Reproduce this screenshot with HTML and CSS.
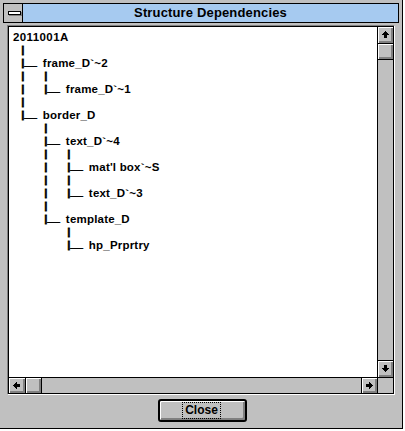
FILE: index.html
```html
<!DOCTYPE html>
<html>
<head>
<meta charset="utf-8">
<title>Structure Dependencies</title>
<link rel="stylesheet" href="styles.css">
</head>
<body>
<div class="window">
  <div class="titlebar">
    <div class="sysmenu"><span class="sysbar"></span></div>
    <div class="title">Structure Dependencies</div>
  </div>
  <div class="client">
    <div class="listwrap">
      <div class="listbox">
        <div class="content">
          <div class="row root">2011001A</div>
          <div class="row"><span class="bar">|</span></div>
          <div class="row"><span class="bar">|</span><span class="us">__</span> frame_D`~2</div>
          <div class="row"><span class="ind"><span class="bar">|</span></span><span class="bar">|</span></div>
          <div class="row"><span class="ind"><span class="bar">|</span></span><span class="bar">|</span><span class="us">__</span> frame_D`~1</div>
          <div class="row"><span class="bar">|</span></div>
          <div class="row"><span class="bar">|</span><span class="us">__</span> border_D</div>
          <div class="row"><span class="ind"></span><span class="bar">|</span></div>
          <div class="row"><span class="ind"></span><span class="bar">|</span><span class="us">__</span> text_D`~4</div>
          <div class="row"><span class="ind"></span><span class="ind"><span class="bar">|</span></span><span class="bar">|</span></div>
          <div class="row"><span class="ind"></span><span class="ind"><span class="bar">|</span></span><span class="bar">|</span><span class="us">__</span> mat'l box`~S</div>
          <div class="row"><span class="ind"></span><span class="ind"><span class="bar">|</span></span><span class="bar">|</span></div>
          <div class="row"><span class="ind"></span><span class="ind"><span class="bar">|</span></span><span class="bar">|</span><span class="us">__</span> text_D`~3</div>
          <div class="row"><span class="ind"></span><span class="bar">|</span></div>
          <div class="row"><span class="ind"></span><span class="bar">|</span><span class="us">__</span> template_D</div>
          <div class="row"><span class="ind"></span><span class="ind"></span><span class="bar">|</span></div>
          <div class="row"><span class="ind"></span><span class="ind"></span><span class="bar">|</span><span class="us">__</span> hp_Prprtry</div>
        </div>
        <div class="vscroll">
          <div class="sb up"><svg width="7" height="7" viewBox="0 0 7 7"><path d="M3 0h1v1h1v1h1v1h1v1H5v3H2V4H0V3h1V2h1V1h1z"/></svg></div>
          <div class="sb vthumb"></div>
          <div class="track"></div>
          <div class="sb down"><svg width="7" height="7" viewBox="0 0 7 7"><path transform="rotate(180 3.5 3.5)" d="M3 0h1v1h1v1h1v1h1v1H5v3H2V4H0V3h1V2h1V1h1z"/></svg></div>
        </div>
        <div class="hscroll">
          <div class="sb left"><svg width="7" height="7" viewBox="0 0 7 7"><path transform="rotate(-90 3.5 3.5)" d="M3 0h1v1h1v1h1v1h1v1H5v3H2V4H0V3h1V2h1V1h1z"/></svg></div>
          <div class="sb hthumb"></div>
          <div class="track"></div>
          <div class="sb right"><svg width="7" height="7" viewBox="0 0 7 7"><path transform="rotate(90 3.5 3.5)" d="M3 0h1v1h1v1h1v1h1v1H5v3H2V4H0V3h1V2h1V1h1z"/></svg></div>
        </div>
        <div class="corner"></div>
      </div>
    </div>
    <div class="actions">
      <button class="btn"><span class="label">Close</span></button>
    </div>
  </div>
</div>
</body>
</html>
```

FILE: styles.css
```css
* {
  box-sizing: border-box;
}

body {
  margin: 0;
  background: #ffffff;
  font-family: "Liberation Sans", Arial, sans-serif;
  color: #000;
}

.window {
  width: 403px;
  height: 429px;
  background: #c0c0c0;
  border-right: 1px solid #000;
  border-bottom: 1px solid #000;
  padding: 3px 3px 0 3px;
  display: flex;
  flex-direction: column;
}

.titlebar {
  height: 20px;
  border: 1px solid #000;
  display: flex;
  flex: none;
}

.sysmenu {
  width: 19px;
  border-right: 1px solid #000;
  background: #c0c0c0;
  display: flex;
  align-items: center;
  padding-left: 4px;
}

.sysbar {
  width: 13px;
  height: 4px;
  border: 1px solid #000;
  background: #fff;
  box-shadow: 1px 1px 0 #808080;
}

.title {
  flex: 1;
  background: #a6caf0;
  text-align: center;
  font-weight: bold;
  font-size: 13px;
  letter-spacing: 0.15px;
  line-height: 18px;
}

.client {
  flex: 1;
  display: flex;
  flex-direction: column;
  padding: 2px 0 0 4px;
}

.listwrap {
  width: 388px;
  height: 370px;
  border: 1px solid;
  border-color: #808080 #fff #fff #808080;
}

.listbox {
  height: 100%;
  border: 1px solid #000;
  background: #fff;
  display: grid;
  grid-template-columns: 1fr 16px;
  grid-template-rows: 1fr 16px;
}

.content {
  padding-top: 4px;
  overflow: hidden;
  font-weight: bold;
  font-size: 11.5px;
  line-height: 13px;
}

.row {
  height: 13px;
  white-space: nowrap;
  padding-left: 12.5px;
  letter-spacing: 0.2px;
}

.row.root {
  padding-left: 4px;
  letter-spacing: 0.4px;
}

.ind {
  display: inline-block;
  width: 23px;
}

.bar {
  font-size: 9.5px;
  line-height: 0;
  letter-spacing: 0;
  vertical-align: 1.5px;
  -webkit-text-stroke: 0.8px #000;
}

.us {
  line-height: 0;
  letter-spacing: 0;
  vertical-align: 2px;
  margin-right: 2.5px;
  -webkit-text-stroke: 0.5px #000;
}

.vscroll {
  border-left: 1px solid #000;
  background: #c0c0c0;
  display: flex;
  flex-direction: column;
}

.hscroll {
  border-top: 1px solid #000;
  background: #c0c0c0;
  display: flex;
}

.corner {
  border-left: 1px solid #000;
  border-top: 1px solid #000;
  background: #c0c0c0;
}

.track {
  flex: 1;
}

.sb {
  flex: none;
  background: #c0c0c0;
  box-shadow: inset 1px 1px 0 #fff, inset -2px -2px 0 #808080;
  display: flex;
  align-items: center;
  justify-content: center;
}

.sb svg {
  display: block;
  fill: #000;
  shape-rendering: crispEdges;
  margin: 0 1px 1px 0;
}

.up {
  height: 17px;
  border-bottom: 1px solid #000;
}

.vthumb {
  height: 16px;
  border-bottom: 1px solid #000;
}

.down {
  height: 17px;
  border-top: 1px solid #000;
}

.left {
  width: 17px;
  border-right: 1px solid #000;
}

.hthumb {
  width: 16px;
  border-right: 1px solid #000;
}

.right {
  width: 16px;
  border-left: 1px solid #000;
}

.actions {
  display: flex;
  justify-content: center;
  padding: 4px 2px 0 0;
}

.btn {
  width: 89px;
  height: 23px;
  border: 2px solid #000;
  border-radius: 3px;
  background: #c0c0c0;
  box-shadow: inset 1px 1px 0 #fff, inset -2px -2px 0 #808080;
  padding: 0 1px 1px 0;
  display: flex;
  align-items: center;
  justify-content: center;
  font-family: "Liberation Sans", Arial, sans-serif;
  font-weight: bold;
  font-size: 12px;
  color: #000;
}

.label {
  border: 1px dotted #000;
  padding: 0 2px;
  line-height: 15px;
}
```
